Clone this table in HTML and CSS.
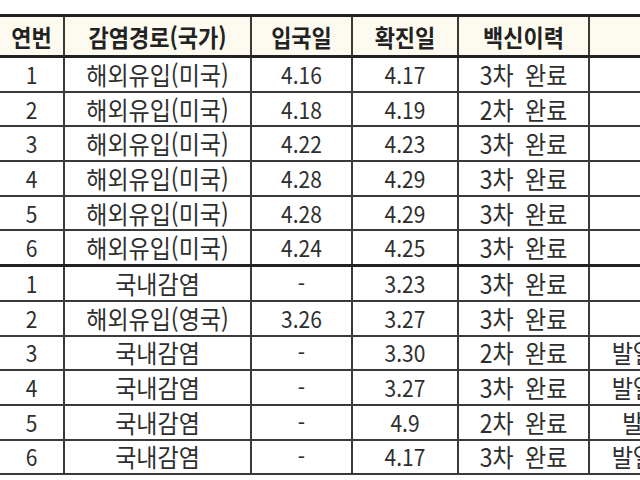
FILE: index.html
```html
<!DOCTYPE html>
<html lang="ko">
<head>
<meta charset="utf-8">
<title>확진자 현황</title>
<link rel="stylesheet" href="styles.css">
</head>
<body>
<div class="frame">
<table class="cases">
  <colgroup>
    <col class="c-no"><col class="c-route"><col class="c-entry"><col class="c-conf"><col class="c-vac"><col class="c-sym">
  </colgroup>
  <thead>
    <tr><th><span>연번</span></th><th><span>감염경로(국가)</span></th><th><span>입국일</span></th><th><span>확진일</span></th><th><span>백신이력</span></th><th></th></tr>
  </thead>
  <tbody>
    <tr><td class="n"><span>1</span></td><td><span>해외유입(미국)</span></td><td class="n"><span>4.16</span></td><td class="n"><span>4.17</span></td><td class="v"><span>3차 완료</span></td><td></td></tr>
    <tr><td class="n"><span>2</span></td><td><span>해외유입(미국)</span></td><td class="n"><span>4.18</span></td><td class="n"><span>4.19</span></td><td class="v"><span>2차 완료</span></td><td></td></tr>
    <tr><td class="n"><span>3</span></td><td><span>해외유입(미국)</span></td><td class="n"><span>4.22</span></td><td class="n"><span>4.23</span></td><td class="v"><span>3차 완료</span></td><td></td></tr>
    <tr><td class="n"><span>4</span></td><td><span>해외유입(미국)</span></td><td class="n"><span>4.28</span></td><td class="n"><span>4.29</span></td><td class="v"><span>3차 완료</span></td><td><span>무증상</span></td></tr>
    <tr><td class="n"><span>5</span></td><td><span>해외유입(미국)</span></td><td class="n"><span>4.28</span></td><td class="n"><span>4.29</span></td><td class="v"><span>3차 완료</span></td><td><span>무증상</span></td></tr>
    <tr><td class="n"><span>6</span></td><td><span>해외유입(미국)</span></td><td class="n"><span>4.24</span></td><td class="n"><span>4.25</span></td><td class="v"><span>3차 완료</span></td><td></td></tr>
    <tr class="sep"><td class="n"><span>1</span></td><td><span>국내감염</span></td><td class="n"><span>-</span></td><td class="n"><span>3.23</span></td><td class="v"><span>3차 완료</span></td><td></td></tr>
    <tr><td class="n"><span>2</span></td><td><span>해외유입(영국)</span></td><td class="n"><span>3.26</span></td><td class="n"><span>3.27</span></td><td class="v"><span>3차 완료</span></td><td></td></tr>
    <tr><td class="n"><span>3</span></td><td><span>국내감염</span></td><td class="n"><span>-</span></td><td class="n"><span>3.30</span></td><td class="v"><span>2차 완료</span></td><td><span>발열, 인후통</span></td></tr>
    <tr><td class="n"><span>4</span></td><td><span>국내감염</span></td><td class="n"><span>-</span></td><td class="n"><span>3.27</span></td><td class="v"><span>3차 완료</span></td><td><span>발열, 인후통</span></td></tr>
    <tr><td class="n"><span>5</span></td><td><span>국내감염</span></td><td class="n"><span>-</span></td><td class="n"><span>4.9</span></td><td class="v"><span>2차 완료</span></td><td><span>발열, 기침</span></td></tr>
    <tr><td class="n"><span>6</span></td><td><span>국내감염</span></td><td class="n"><span>-</span></td><td class="n"><span>4.17</span></td><td class="v"><span>3차 완료</span></td><td><span>발열, 인후통</span></td></tr>
  </tbody>
</table>
</div>
</body>
</html>
```
FILE: styles.css
```css
html, body {
  margin: 0;
  padding: 0;
  background: #ffffff;
  overflow: hidden;
  width: 640px;
  height: 480px;
}
.frame {
  padding-top: 14px;
  margin-left: -2px;
  width: 900px;
}
.cases {
  border-collapse: collapse;
  table-layout: fixed;
  width: 754px;
  font-family: "Noto Sans CJK KR", "Noto Sans", sans-serif;
  color: #2e2e2e;
  font-size: 23px;
}
.c-no { width: 65px; }
.c-route { width: 187px; }
.c-entry { width: 101px; }
.c-conf { width: 106px; }
.c-vac { width: 131px; }
.c-sym { width: 164px; }
.cases th, .cases td {
  border: 2px solid #3a3a3a;
  text-align: center;
  padding: 0;
  white-space: nowrap;
  line-height: 1;
}
.cases span {
  display: inline-block;
  transform: scaleY(1.1);
}
.cases th {
  height: 38px;
  background: #fdfbef;
  font-weight: 700;
  font-size: 22px;
  color: #222222;
  border-top: 3px solid #222;
  border-bottom: 3px solid #222;
}
.cases td {
  height: 32.7px;
}
.cases td.n {
  font-size: 21px;
}
.cases td.v {
  word-spacing: 5px;
}
.cases tr.sep td {
  border-top: 3px solid #222;
}
.cases tbody tr:last-child td {
  border-bottom: 2px solid #3a3a3a;
}
```
